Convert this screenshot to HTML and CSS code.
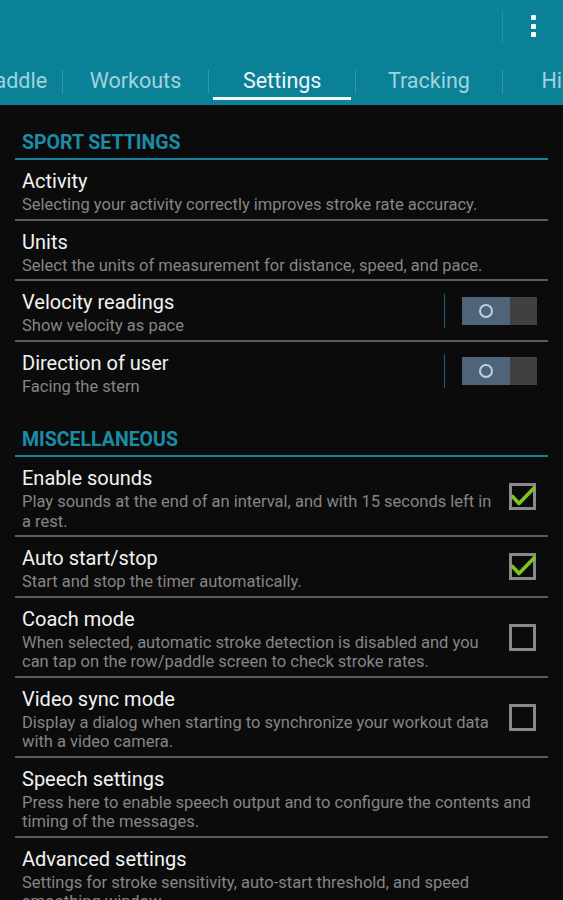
FILE: index.html
```html
<!DOCTYPE html>
<html lang="en">
<head>
    <meta charset="UTF-8">
    <meta name="viewport" content="width=device-width, initial-scale=1.0">
    <title>Settings</title>
    <link rel="stylesheet" href="styles.css">
</head>
<body>
    <header class="appbar">
        <div class="actionbar">
            <div class="spacer"></div>
            <button class="overflow" aria-label="More options">
                <span class="dot"></span>
                <span class="dot"></span>
                <span class="dot"></span>
            </button>
        </div>
        <nav class="tabs">
            <div class="tab"><span class="tab-label">Row/Paddle</span><span class="indicator"></span></div>
            <span class="tab-sep"></span>
            <div class="tab"><span class="tab-label">Workouts</span><span class="indicator"></span></div>
            <span class="tab-sep"></span>
            <div class="tab active"><span class="tab-label">Settings</span><span class="indicator"></span></div>
            <span class="tab-sep"></span>
            <div class="tab"><span class="tab-label">Tracking</span><span class="indicator"></span></div>
            <span class="tab-sep"></span>
            <div class="tab"><span class="tab-label">History</span><span class="indicator"></span></div>
        </nav>
    </header>

    <main class="prefs">
        <section class="pref-group">
            <h2 class="group-title">Sport settings</h2>
            <div class="pref">
                <div class="pref-text">
                    <div class="pref-title">Activity</div>
                    <div class="pref-summary">Selecting your activity correctly improves stroke rate accuracy.</div>
                </div>
            </div>
            <div class="pref">
                <div class="pref-text">
                    <div class="pref-title">Units</div>
                    <div class="pref-summary">Select the units of measurement for distance, speed, and pace.</div>
                </div>
            </div>
            <div class="pref">
                <div class="pref-text">
                    <div class="pref-title">Velocity readings</div>
                    <div class="pref-summary">Show velocity as pace</div>
                </div>
                <div class="pref-widget">
                    <span class="widget-divider"></span>
                    <div class="switch"><span class="switch-thumb"><span class="ring"></span></span><span class="switch-track"></span></div>
                </div>
            </div>
            <div class="pref">
                <div class="pref-text">
                    <div class="pref-title">Direction of user</div>
                    <div class="pref-summary">Facing the stern</div>
                </div>
                <div class="pref-widget">
                    <span class="widget-divider"></span>
                    <div class="switch"><span class="switch-thumb"><span class="ring"></span></span><span class="switch-track"></span></div>
                </div>
            </div>
        </section>

        <section class="pref-group">
            <h2 class="group-title">Miscellaneous</h2>
            <div class="pref">
                <div class="pref-text">
                    <div class="pref-title">Enable sounds</div>
                    <div class="pref-summary">Play sounds at the end of an interval, and with 15 seconds left in a rest.</div>
                </div>
                <div class="pref-widget">
                    <svg class="checkbox" width="27" height="27" viewBox="0 0 27 27">
                        <rect x="1.5" y="1.5" width="24" height="24" fill="none" stroke="#8a8a8a" stroke-width="3"/>
                        <path d="M3.5 13.5 L10 20.5 L25 5" fill="none" stroke="#7dc520" stroke-width="3.6" stroke-linecap="round" stroke-linejoin="round"/>
                    </svg>
                </div>
            </div>
            <div class="pref">
                <div class="pref-text">
                    <div class="pref-title">Auto start/stop</div>
                    <div class="pref-summary">Start and stop the timer automatically.</div>
                </div>
                <div class="pref-widget">
                    <svg class="checkbox" width="27" height="27" viewBox="0 0 27 27">
                        <rect x="1.5" y="1.5" width="24" height="24" fill="none" stroke="#8a8a8a" stroke-width="3"/>
                        <path d="M3.5 13.5 L10 20.5 L25 5" fill="none" stroke="#7dc520" stroke-width="3.6" stroke-linecap="round" stroke-linejoin="round"/>
                    </svg>
                </div>
            </div>
            <div class="pref">
                <div class="pref-text">
                    <div class="pref-title">Coach mode</div>
                    <div class="pref-summary">When selected, automatic stroke detection is disabled and you can tap on the row/paddle screen to check stroke rates.</div>
                </div>
                <div class="pref-widget">
                    <svg class="checkbox" width="27" height="27" viewBox="0 0 27 27">
                        <rect x="1.5" y="1.5" width="24" height="24" fill="none" stroke="#8a8a8a" stroke-width="3"/>
                    </svg>
                </div>
            </div>
            <div class="pref">
                <div class="pref-text">
                    <div class="pref-title">Video sync mode</div>
                    <div class="pref-summary">Display a dialog when starting to synchronize your workout data with a video camera.</div>
                </div>
                <div class="pref-widget">
                    <svg class="checkbox" width="27" height="27" viewBox="0 0 27 27">
                        <rect x="1.5" y="1.5" width="24" height="24" fill="none" stroke="#8a8a8a" stroke-width="3"/>
                    </svg>
                </div>
            </div>
            <div class="pref">
                <div class="pref-text">
                    <div class="pref-title">Speech settings</div>
                    <div class="pref-summary">Press here to enable speech output and to configure the contents and timing of the messages.</div>
                </div>
            </div>
            <div class="pref">
                <div class="pref-text">
                    <div class="pref-title">Advanced settings</div>
                    <div class="pref-summary">Settings for stroke sensitivity, auto-start threshold, and speed smoothing window.</div>
                </div>
            </div>
        </section>
    </main>
</body>
</html>
```

FILE: styles.css
```css
/* Page */
html, body {
    overflow: hidden;
}
body {
    margin: 0;
    background-color: #0b0b0b;
    color: #f2f2f2;
    font-family: "Roboto", "Liberation Sans", sans-serif;
}

/* Teal app bar */
.appbar {
    background-color: #0a8197;
    overflow: hidden;
}
.actionbar {
    display: flex;
    align-items: center;
    height: 57px;
}
.spacer {
    flex: 1;
}
.overflow {
    width: 61px;
    height: 33px;
    padding: 0;
    margin: 0;
    border: none;
    border-left: 1px solid rgba(255, 255, 255, 0.12);
    background: none;
    display: flex;
    flex-direction: column;
    align-items: center;
    justify-content: center;
    gap: 3.5px;
    margin-top: -5px;
}
.dot {
    width: 5px;
    height: 5px;
    border-radius: 1px;
    background-color: #f4fbfc;
}

/* Tabs strip (scrolled so Settings sits in the middle) */
.tabs {
    display: flex;
    align-items: center;
    height: 48px;
    margin-left: -84px;
}
.tab {
    flex: 0 0 145.7px;
    height: 100%;
    display: flex;
    flex-direction: column;
}
.tab-label {
    flex: 1;
    display: flex;
    align-items: center;
    justify-content: center;
    padding-top: 6px;
    font-size: 21.5px;
    color: #a3d2db;
    white-space: nowrap;
}
.indicator {
    height: 3px;
    margin: 0 4px 5px;
}
.tab.active .tab-label {
    color: #eaf6f8;
}
.tab.active .indicator {
    background-color: #eef8fa;
}
.tab-sep {
    flex: 0 0 1px;
    height: 24px;
    margin-top: 2px;
    background-color: rgba(255, 255, 255, 0.18);
}

/* Preference list */
.prefs {
    margin: 0 15px;
}
.group-title {
    margin: 0;
    padding: 26px 7px 3px;
    line-height: 24px;
    font-size: 19.5px;
    font-weight: bold;
    text-transform: uppercase;
    color: #1a8ca6;
    border-bottom: 2px solid #1a7f98;
}
.pref {
    display: flex;
    align-items: center;
    padding: 8px 12px 4px 7px;
    border-bottom: 2px solid #5c5c5c;
}
.pref:last-child {
    border-bottom-color: transparent;
}
.pref-text {
    flex: 1;
    min-width: 0;
}
.pref-title {
    font-size: 20px;
    line-height: 27px;
    color: #f2f2f2;
}
.pref-summary {
    font-size: 16.5px;
    line-height: 19.5px;
    color: #858585;
}
.pref-widget {
    display: flex;
    align-items: center;
    margin-left: 12px;
    margin-top: -3px;
}

/* Toggle switch */
.widget-divider {
    width: 1px;
    height: 34px;
    margin-right: 17px;
    background-color: #1d5f74;
}
.switch {
    display: flex;
    width: 75px;
    height: 28px;
    margin-right: -1px;
}
.switch-thumb {
    width: 48px;
    display: flex;
    align-items: center;
    justify-content: center;
    background-color: #4f6479;
}
.ring {
    width: 10px;
    height: 10px;
    border-radius: 50%;
    border: 2.5px solid #b9d1e5;
}
.switch-track {
    flex: 1;
    background-color: #404040;
}

/* Checkbox */
.checkbox {
    display: block;
    overflow: visible;
}
```
